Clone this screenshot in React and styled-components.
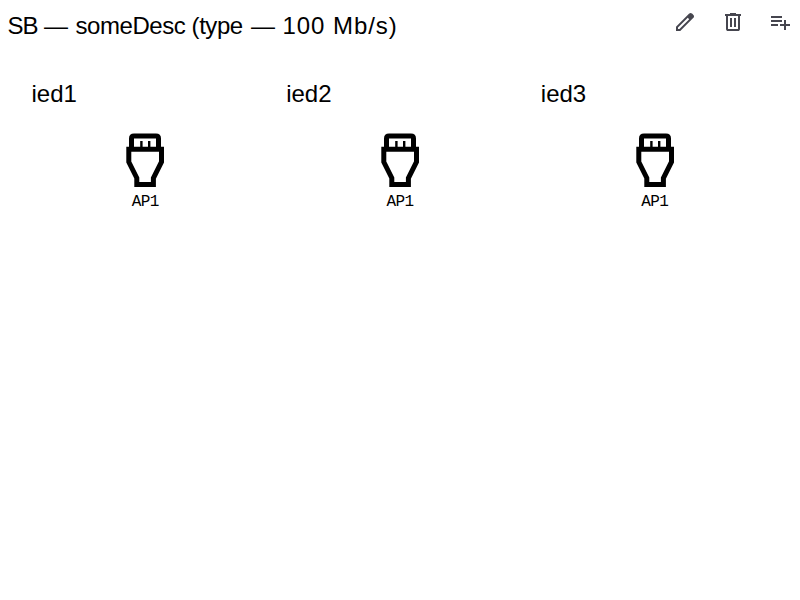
import React from "react";
import styled, { createGlobalStyle } from "styled-components";

const Global = createGlobalStyle`
  body { margin: 0; background: #fff; color: #000; }
  * { box-sizing: border-box; }
`;
const Page = styled.main`
  font-family: "Liberation Sans", Arial, sans-serif;
`;
const Header = styled.header`
  display: flex;
  justify-content: space-between;
  height: 60px;
  padding-left: 7.5px;
`;
const Title = styled.h1`
  display: flex;
  margin: 0;
  padding-top: 2px;
  font-size: 24px;
  font-weight: 400;
  line-height: 48px;
  white-space: pre;
`;
const Part = styled.span`
  width: ${(p) => p.$width}px;
  letter-spacing: ${(p) => p.$spacing || 0}px;
`;
const Nav = styled.nav`
  display: flex;
  gap: 23px;
  padding: 10px 8px 0 0;
`;
const IconButton = styled.button`
  width: 24px;
  height: 24px;
  padding: 0;
  border: 0;
  background: none;
  color: #46464f;
  svg { display: block; }
  &:first-child { margin-right: 1px; }
`;
const Grid = styled.section`
  display: grid;
  grid-template-columns: repeat(3, 226.67px);
  gap: 28px;
  padding: 10px 32px;
`;
const IedTitle = styled.h3`
  margin: 0 0 0 -0.5px;
  font-size: 24px;
  font-weight: 400;
  line-height: 48px;
`;
const AccessPoint = styled.div`
  display: flex;
  flex-direction: column;
  align-items: center;
  padding-top: 14px;
`;
const Label = styled.span`
  margin-top: 4px;
  font-family: "Liberation Mono", monospace;
  font-size: 16px;
  letter-spacing: -0.6px;
  line-height: 20px;
`;

const icons = [
  ["Edit", "M200-200h57l391-391-57-57-391 391v57Zm-80 80v-170l528-527q12-11 26.5-17t30.5-6q16 0 31 6t26 18l55 56q12 11 17.5 26t5.5 30q0 16-5.5 30.5T817-647L290-120H120Z"],
  ["Delete", "M280-120q-33 0-56.5-23.5T200-200v-520h-40v-80h200v-40h240v40h200v80h-40v520q0 33-23.5 56.5T680-120H280Zm400-600H280v520h400v-520ZM360-280h80v-360h-80v360Zm160 0h80v-360h-80v360Z"],
  ["Add", "M120-320v-80h280v80H120Zm0-160v-80h440v80H120Zm0-160v-80h440v80H120Zm520 480v-160H480v-80h160v-160h80v160h160v80H720v160h-80Z"],
];

const Plug = () => (
  <svg width="40" height="56" viewBox="125 132 40 56" fill="none" stroke="#000">
    <path strokeWidth="5" d="M131.5 149V138.5Q131.5 136.1 134 136.1H156Q158.5 136.1 158.5 138.5V149" />
    <path strokeWidth="5" d="M128.8 149.3H161.5V162L153.4 178V184.4H136.8V178L128.8 162Z" />
    <path strokeWidth="2.4" d="M141.4 141V149M149.2 141V149" />
  </svg>
);

export default function App() {
  return (
    <Page>
      <Global />
      <Header>
        <Title>
          <Part $width={36.5} $spacing={-1}>SB</Part>
          <Part $width={31.5}>—</Part>
          <Part $width={175.5} $spacing={-0.44}>someDesc (type</Part>
          <Part $width={31.5}>—</Part>
          <Part $width={118} $spacing={0.95}>100 Mb/s)</Part>
        </Title>
        <Nav>
          {icons.map(([name, d]) => (
            <IconButton key={name} aria-label={name}>
              <svg width="24" height="24" viewBox="0 -960 960 960" fill="currentColor"><path d={d} /></svg>
            </IconButton>
          ))}
        </Nav>
      </Header>
      <Grid>
        {["ied1", "ied2", "ied3"].map((name) => (
          <article key={name}>
            <IedTitle>{name}</IedTitle>
            <AccessPoint>
              <Plug />
              <Label>AP1</Label>
            </AccessPoint>
          </article>
        ))}
      </Grid>
    </Page>
  );
}
